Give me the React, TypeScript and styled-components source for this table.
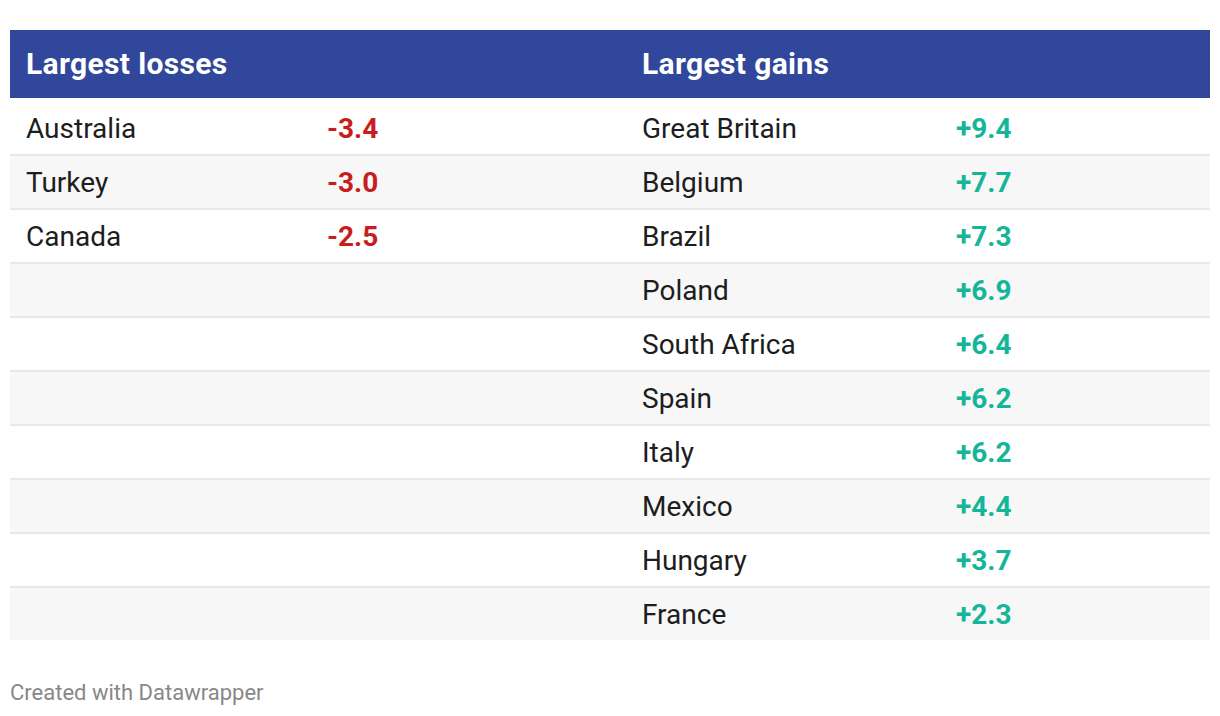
import React from "react";
import styled, { createGlobalStyle } from "styled-components";

type Entry = { country: string; value: string };

const losses: Entry[] = [
  { country: "Australia", value: "-3.4" },
  { country: "Turkey", value: "-3.0" },
  { country: "Canada", value: "-2.5" },
];

const gains: Entry[] = [
  { country: "Great Britain", value: "+9.4" },
  { country: "Belgium", value: "+7.7" },
  { country: "Brazil", value: "+7.3" },
  { country: "Poland", value: "+6.9" },
  { country: "South Africa", value: "+6.4" },
  { country: "Spain", value: "+6.2" },
  { country: "Italy", value: "+6.2" },
  { country: "Mexico", value: "+4.4" },
  { country: "Hungary", value: "+3.7" },
  { country: "France", value: "+2.3" },
];

const GlobalStyle = createGlobalStyle`
  html, body {
    margin: 0;
    padding: 0;
    background: #ffffff;
  }
  body {
    font-family: Roboto, "Liberation Sans", sans-serif;
    -webkit-font-smoothing: antialiased;
  }
`;

const App = () => {
  const rowCount = Math.max(losses.length, gains.length);
  const rows = Array.from({ length: rowCount }, (_, i) => ({
    loss: losses[i],
    gain: gains[i],
  }));

  return (
    <>
      <GlobalStyle />
      <Page>
        <Table>
          <HeaderRow>
            <HeadCell>Largest losses</HeadCell>
            <HeadCell />
            <HeadCell>Largest gains</HeadCell>
            <HeadCell />
          </HeaderRow>
          <Body>
            {rows.map((r, i) => (
              <Row key={i} $striped={i % 2 === 1} $last={i === rowCount - 1}>
                <Cell>{r.loss?.country}</Cell>
                <Value $tone="loss">{r.loss?.value}</Value>
                <Cell>{r.gain?.country}</Cell>
                <Value $tone="gain">{r.gain?.value}</Value>
              </Row>
            ))}
          </Body>
        </Table>
        <Footer>Created with Datawrapper</Footer>
      </Page>
    </>
  );
};
export default App;

const Page = styled.div`
  padding: 30px 10px 0;
  display: flex;
  flex-direction: column;
`;

const Table = styled.div`
  display: flex;
  flex-direction: column;
`;

const grid = `
  display: grid;
  grid-template-columns: 301px 315px 314px 1fr;
  align-items: center;
`;

const HeaderRow = styled.div`
  ${grid}
  height: 68px;
  padding-bottom: 2px;
  box-sizing: border-box;
  background: #30479b;
`;

const HeadCell = styled.div`
  padding-left: 16px;
  font: 700 30px Roboto, "Liberation Sans", sans-serif;
  letter-spacing: 0.35px;
  color: #ffffff;
`;

const Body = styled.div`
  padding-top: 4px;
  display: flex;
  flex-direction: column;
`;

const Row = styled.div<{ $striped: boolean; $last: boolean }>`
  ${grid}
  height: 52px;
  background: ${p => (p.$striped ? "#f7f7f7" : "#ffffff")};
  border-bottom: ${p => (p.$last ? "none" : "2px solid #e8e8e8")};
`;

const Cell = styled.div`
  padding-left: 16px;
  font: 400 28px Roboto, "Liberation Sans", sans-serif;
  color: #1d1d1d;
`;

const Value = styled.div<{ $tone: "loss" | "gain" }>`
  padding-left: 16px;
  font: 700 28px Roboto, "Liberation Sans", sans-serif;
  color: ${p => (p.$tone === "loss" ? "#c71e1d" : "#15b59a")};
`;

const Footer = styled.div`
  margin-top: 40px;
  font: 400 22px Roboto, "Liberation Sans", sans-serif;
  color: #888888;
`;
